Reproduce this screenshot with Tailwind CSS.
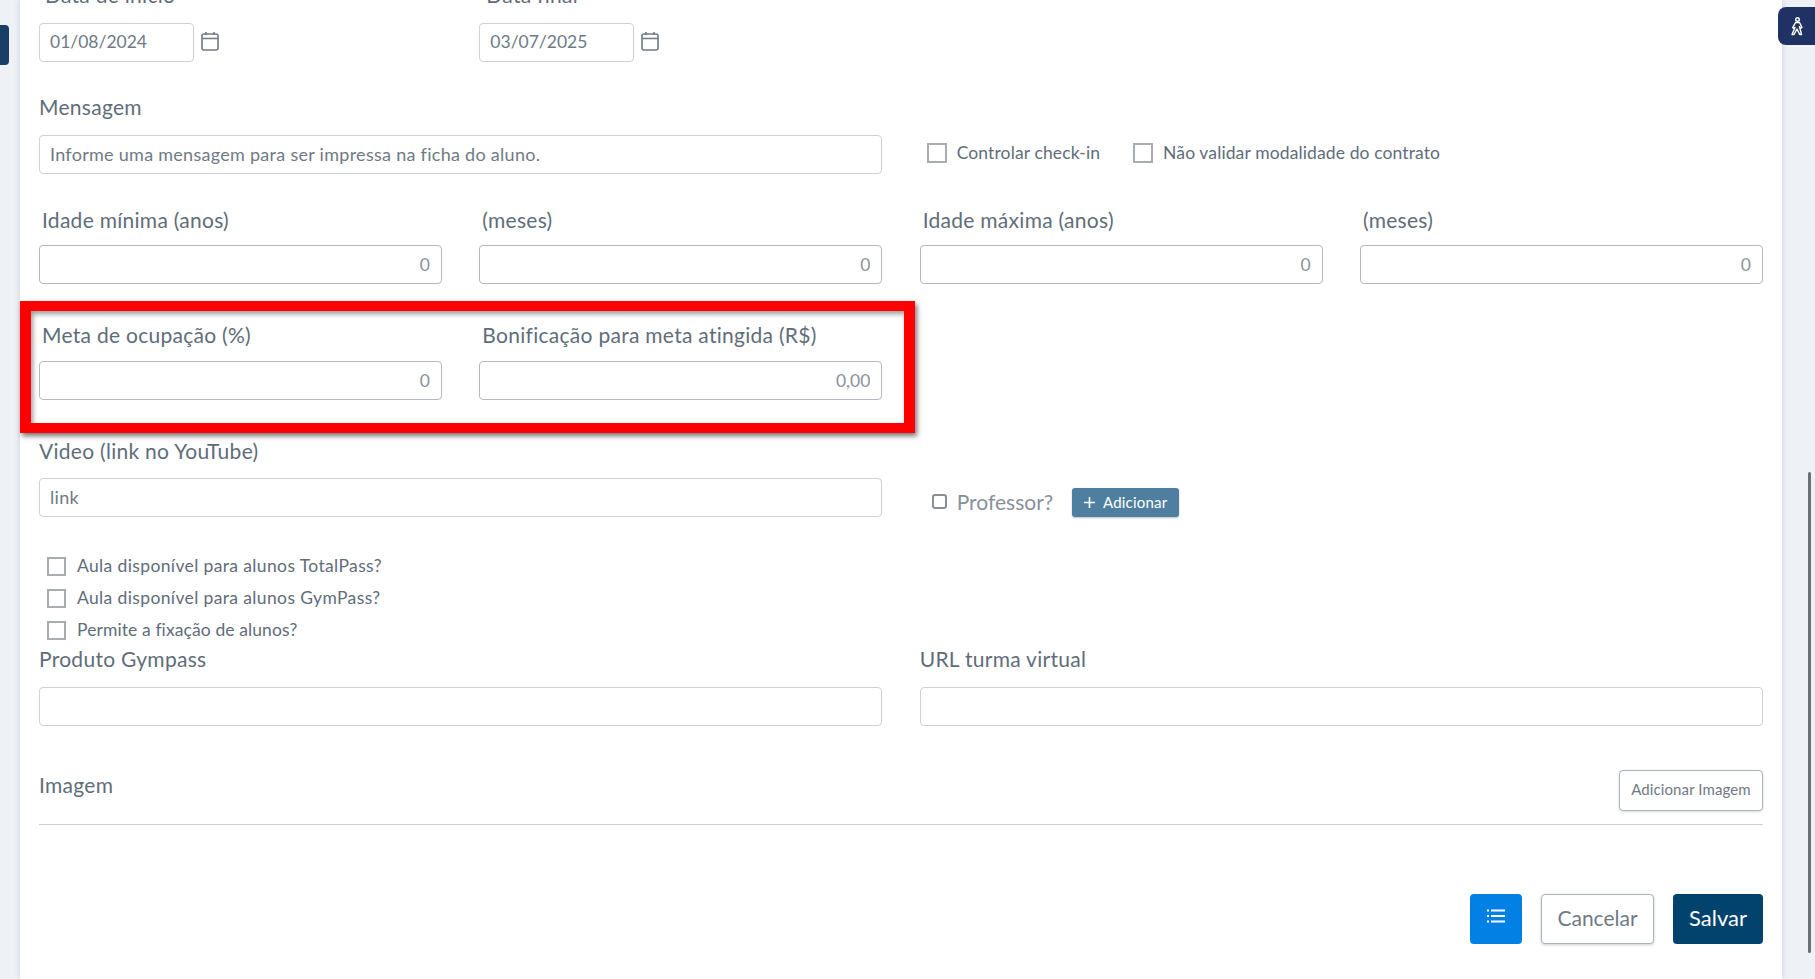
<!DOCTYPE html>
<html lang="pt-BR">
<head>
  <meta charset="UTF-8" />
  <meta name="viewport" content="width=device-width, initial-scale=1" />
  <title>Turma</title>
  <script src="https://cdn.jsdelivr.net/npm/@tailwindcss/browser@4"></script>
</head>
<body class="h-[979px] overflow-hidden bg-[#eef1f6] font-['Lato','Noto_Sans',sans-serif] text-[#5f6d7a] relative">
  <!-- side tabs -->
  <div class="absolute left-0 top-[25px] w-[9px] h-[40px] bg-[#1a3f66] rounded-r-[4px]"></div>
  <div class="absolute left-[1778px] top-[7px] w-[37px] h-[38px] bg-[#1f3263] rounded-l-[8px] z-10 flex items-center justify-center">
    <svg width="14" height="19" viewBox="0 0 14 19" fill="none" stroke="#fff" stroke-width="1.4" stroke-linejoin="round" stroke-linecap="round">
      <circle cx="7.5" cy="2.5" r="1.8"/>
      <path d="M5.5 5.5h4l2.5 5-1.500.8-1-1.600 2 7.800h-1.800L7 12l-3 5.500H2l3-7-.7 1-1.600-.8z"/>
    </svg>
  </div>

  <!-- scrollbar -->
  <div class="absolute left-[1808px] top-[472px] w-[3px] h-[481px] bg-[#6c7075] rounded-full"></div>

  <main class="ml-[20px] w-[1762px] h-[979px] bg-white shadow-[0_0_6px_rgba(0,0,0,0.15)] px-[19px] overflow-hidden">
    <!-- datas -->
    <div class="grid grid-cols-4 gap-x-[37.33px] w-[1724px] -mt-[20px]">
      <div>
        <div class="h-[30px] leading-[30px] text-[21px] tracking-[0.28px] pl-[6px] mb-[13px]">Data de início</div>
        <div class="flex items-center gap-[7px]">
          <input value="01/08/2024" class="w-[155px] h-[39px] border border-[#ced2d8] rounded-[4px] px-[10px] pb-[2px] text-[17.5px] text-[#6f7a85] outline-none" />
          <svg class="-mt-[3px]" width="18" height="20" viewBox="0 0 18 20" fill="none" stroke="#6f7a85" stroke-width="1.6"><rect x="1" y="3" width="16" height="16" rx="2"/><path d="M1 7.500h16M5 1v3M13 1v3"/></svg>
        </div>
      </div>
      <div>
        <div class="h-[30px] leading-[30px] text-[21px] tracking-[0.28px] pl-[7px] mb-[13px]">Data final</div>
        <div class="flex items-center gap-[7px]">
          <input value="03/07/2025" class="w-[155px] h-[39px] border border-[#ced2d8] rounded-[4px] px-[10px] pb-[2px] text-[17.5px] text-[#6f7a85] outline-none" />
          <svg class="-mt-[3px]" width="18" height="20" viewBox="0 0 18 20" fill="none" stroke="#6f7a85" stroke-width="1.6"><rect x="1" y="3" width="16" height="16" rx="2"/><path d="M1 7.500h16M5 1v3M13 1v3"/></svg>
        </div>
      </div>
    </div>

    <!-- mensagem -->
    <div class="grid grid-cols-4 gap-x-[37.33px] w-[1724px] mt-[30px]">
      <div class="col-span-2">
        <div class="h-[30px] leading-[30px] text-[21px] tracking-[0.28px] mb-[13px]">Mensagem</div>
        <input placeholder="Informe uma mensagem para ser impressa na ficha do aluno." class="w-full h-[39px] border border-[#ced2d8] rounded-[4px] px-[10px] pb-[2px] text-[18px] tracking-[0.28px] placeholder:text-[#6f7a85] outline-none" />
      </div>
      <div class="col-span-2 flex items-end h-[82px] pb-[11px] gap-[33px] pl-[7px]">
        <label class="flex items-center gap-[10px] text-[17.5px] tracking-[0.12px] leading-[20px]">
          <span class="w-[20px] h-[20px] border-2 border-[#a9adb3] block"></span>Controlar check-in
        </label>
        <label class="flex items-center gap-[10px] text-[17.5px] tracking-[0.12px] leading-[20px]">
          <span class="w-[20px] h-[20px] border-2 border-[#a9adb3] block"></span>Não validar modalidade do contrato
        </label>
      </div>
    </div>

    <!-- idade -->
    <div class="grid grid-cols-4 gap-x-[37.33px] w-[1724px] mt-[31px]">
      <div>
        <div class="h-[30px] leading-[30px] text-[21px] tracking-[0.28px] pl-[3px] mb-[10px]">Idade mínima (anos)</div>
        <input value="0" class="w-full h-[39px] border border-[#b4b8c0] rounded-[4px] pl-[10px] pr-[11px] text-[17.5px] text-right text-[#8a939c] outline-none" />
      </div>
      <div>
        <div class="h-[30px] leading-[30px] text-[21px] tracking-[0.28px] pl-[3px] mb-[10px]">(meses)</div>
        <input value="0" class="w-full h-[39px] border border-[#b4b8c0] rounded-[4px] pl-[10px] pr-[11px] text-[17.5px] text-right text-[#8a939c] outline-none" />
      </div>
      <div>
        <div class="h-[30px] leading-[30px] text-[21px] tracking-[0.28px] pl-[3px] mb-[10px]">Idade máxima (anos)</div>
        <input value="0" class="w-full h-[39px] border border-[#b4b8c0] rounded-[4px] pl-[10px] pr-[11px] text-[17.5px] text-right text-[#8a939c] outline-none" />
      </div>
      <div>
        <div class="h-[30px] leading-[30px] text-[21px] tracking-[0.28px] pl-[3px] mb-[10px]">(meses)</div>
        <input value="0" class="w-full h-[39px] border border-[#b4b8c0] rounded-[4px] pl-[10px] pr-[11px] text-[17.5px] text-right text-[#8a939c] outline-none" />
      </div>
    </div>

    <!-- meta -->
    <div class="grid grid-cols-4 gap-x-[37.33px] w-[1724px] mt-[36px]">
      <div>
        <div class="h-[30px] leading-[30px] text-[21px] tracking-[0.28px] pl-[3px] mb-[11px]">Meta de ocupação (%)</div>
        <input value="0" class="w-full h-[39px] border border-[#b4b8c0] rounded-[4px] pl-[10px] pr-[11px] text-[17.5px] text-right text-[#8a939c] outline-none" />
      </div>
      <div>
        <div class="h-[30px] leading-[30px] text-[21px] tracking-[0.28px] pl-[3px] mb-[11px] whitespace-nowrap">Bonificação para meta atingida (R$)</div>
        <input value="0,00" class="w-full h-[39px] border border-[#b4b8c0] rounded-[4px] pl-[10px] pr-[11px] text-[17.5px] text-right text-[#8a939c] outline-none" />
      </div>
    </div>

    <!-- video -->
    <div class="grid grid-cols-4 gap-x-[37.33px] w-[1724px] mt-[36px]">
      <div class="col-span-2">
        <div class="h-[30px] leading-[30px] text-[21px] tracking-[0.28px] mb-[12px]">Video (link no YouTube)</div>
        <input placeholder="link" class="w-full h-[39px] border border-[#ced2d8] rounded-[4px] px-[10px] pb-[2px] text-[18px] tracking-[0.28px] placeholder:text-[#6f7a85] outline-none" />
      </div>
      <div class="col-span-2 flex items-end h-[81px] gap-[19px] pl-[12px]">
        <label class="flex items-center gap-[10px] text-[21px] leading-[24px] text-[#87919b] mb-[3px]">
          <span class="w-[15px] h-[15px] -mt-[2px] border-2 border-[#8a8f95] rounded-[3px] block"></span>Professor?
        </label>
        <button class="w-[107px] h-[29px] bg-[#4f7fa0] rounded-[3px] text-white text-[15px] tracking-[0.2px] flex items-center justify-center gap-[8px] shadow-[0_1px_2px_rgba(0,0,0,0.25)]">
          <svg width="11" height="11" viewBox="0 0 11 11" stroke="#fff" stroke-width="1.6"><path d="M5.500 0v11M0 5.500h11"/></svg>Adicionar
        </button>
      </div>
    </div>

    <!-- opcoes -->
    <div class="mt-[33px] pl-[8px]">
      <label class="flex items-center gap-[11px] h-[32px] text-[17.5px] tracking-[0.37px]"><span class="w-[19px] h-[19px] border-2 border-[#a9adb3] block"></span>Aula disponível para alunos TotalPass?</label>
      <label class="flex items-center gap-[11px] h-[32px] text-[17.5px] tracking-[0.37px]"><span class="w-[19px] h-[19px] border-2 border-[#a9adb3] block"></span>Aula disponível para alunos GymPass?</label>
      <label class="flex items-center gap-[11px] h-[32px] text-[17.5px] tracking-[0.1px]"><span class="w-[19px] h-[19px] border-2 border-[#a9adb3] block"></span>Permite a fixação de alunos?</label>
    </div>

    <!-- produto -->
    <div class="grid grid-cols-4 gap-x-[37.33px] w-[1724px] -mt-[2px]">
      <div class="col-span-2">
        <div class="h-[30px] leading-[30px] text-[21px] tracking-[0.28px] mb-[13px]">Produto Gympass</div>
        <input class="w-full h-[39px] border border-[#ced2d8] rounded-[4px] px-[10px] outline-none" />
      </div>
      <div class="col-span-2">
        <div class="h-[30px] leading-[30px] text-[21px] tracking-[0.28px] mb-[13px]">URL turma virtual</div>
        <input class="w-full h-[39px] border border-[#ced2d8] rounded-[4px] px-[10px] outline-none" />
      </div>
    </div>

    <!-- imagem -->
    <div class="flex items-start justify-between w-[1724px] mt-[44px]">
      <div class="h-[30px] leading-[30px] text-[21px] tracking-[0.28px]">Imagem</div>
      <button class="w-[144px] h-[41px] pb-[3px] bg-white border border-[#adb3ba] rounded-[4px] text-[15px] tracking-[0.1px] text-[#6f7a85] shadow-[0_1px_3px_rgba(0,0,0,0.15)]">Adicionar Imagem</button>
    </div>
    <hr class="w-[1724px] mt-[13px] border-[#ccced1]" />

    <!-- acoes -->
    <div class="flex justify-end w-[1724px] mt-[69px] gap-[19px]">
      <button class="w-[52px] h-[50px] bg-[#0380e3] rounded-[4px] flex justify-center pt-[15px]">
        <svg width="18" height="14" viewBox="0 0 18 14" fill="#fff"><rect x="0" y="0.500" width="2" height="2"/><rect x="0" y="6" width="2" height="2"/><rect x="0" y="11.500" width="2" height="2"/><rect x="4" y="0.500" width="14" height="2"/><rect x="4" y="6" width="14" height="2"/><rect x="4" y="11.500" width="14" height="2"/></svg>
      </button>
      <button class="w-[113px] h-[50px] pb-[3px] bg-white border border-[#adb3ba] rounded-[4px] text-[21px] text-[#6f7a85] shadow-[0_1px_3px_rgba(0,0,0,0.2)]">Cancelar</button>
      <button class="w-[90px] h-[50px] pb-[3px] bg-[#02436d] rounded-[4px] text-[22px] text-white">Salvar</button>
    </div>
  </main>

  <!-- destaque -->
  <div class="absolute left-[20px] top-[301px] w-[895px] h-[132px] border-x-[11px] border-y-[10px] border-[#ff0000] shadow-[2px_3px_5px_rgba(0,0,0,0.55),inset_2px_3px_5px_rgba(0,0,0,0.4)]"></div>
</body>
</html>
